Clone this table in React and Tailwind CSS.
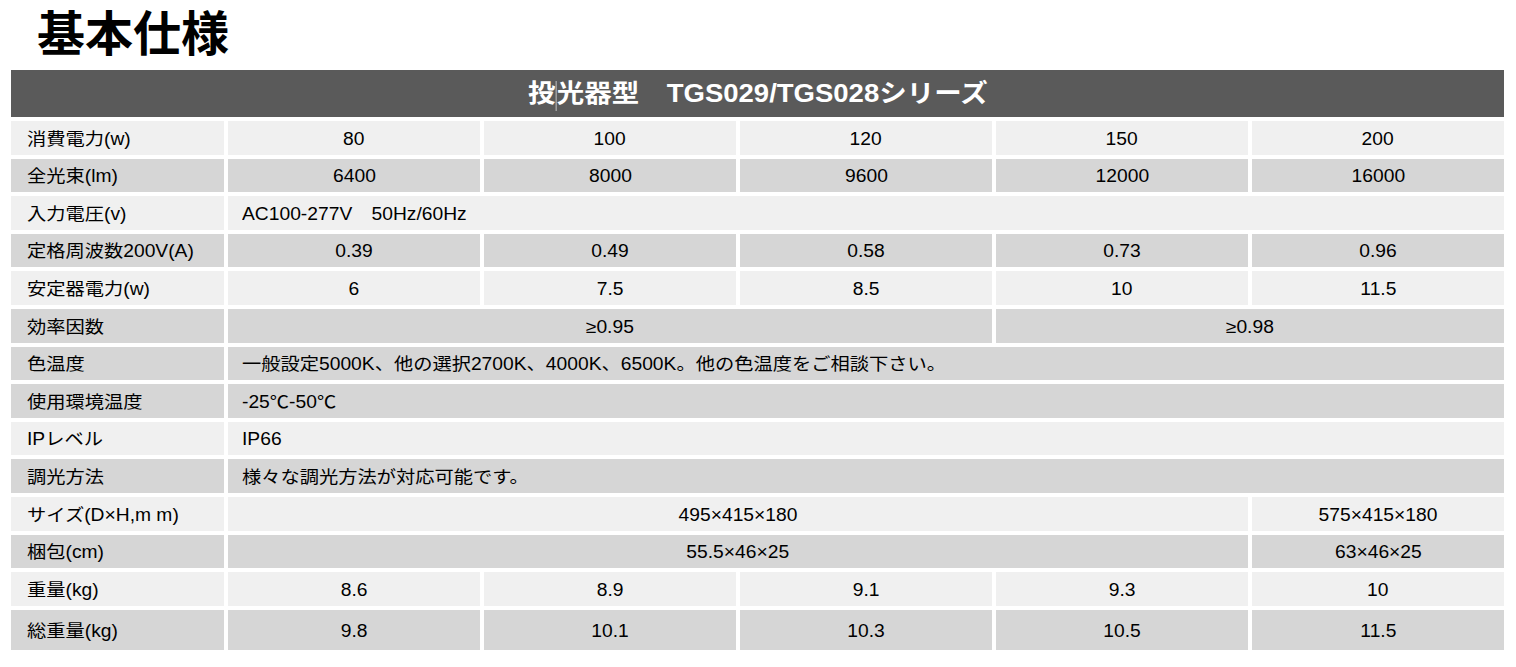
import React from 'react';

// 基本仕様 spec table (TGS029/TGS028)
const spans = {
  1: 'col-span-1',
  2: 'col-span-2',
  3: 'col-span-3',
  4: 'col-span-4',
  5: 'col-span-5',
};

const tones = {
  light: 'bg-[#f0f0f0]',
  dark: 'bg-[#d6d6d6]',
};

const rows = [
  { label: '消費電力(w)', tone: 'light', cells: ['80', '100', '120', '150', '200'] },
  { label: '全光束(lm)', tone: 'dark', cells: ['6400', '8000', '9600', '12000', '16000'] },
  { label: '入力電圧(v)', tone: 'light', wide: 'AC100-277V　50Hz/60Hz' },
  { label: '定格周波数200V(A)', tone: 'dark', cells: ['0.39', '0.49', '0.58', '0.73', '0.96'] },
  { label: '安定器電力(w)', tone: 'light', cells: ['6', '7.5', '8.5', '10', '11.5'] },
  { label: '効率因数', tone: 'dark', cells: [['≥0.95', 3], ['≥0.98', 2]] },
  { label: '色温度', tone: 'dark', wide: '一般設定5000K、他の選択2700K、4000K、6500K。他の色温度をご相談下さい。' },
  { label: '使用環境温度', tone: 'dark', wide: '-25℃-50℃' },
  { label: 'IPレベル', tone: 'light', wide: 'IP66' },
  { label: '調光方法', tone: 'dark', wide: '様々な調光方法が対応可能です。' },
  { label: 'サイズ(D×H,m m)', tone: 'light', cells: [['495×415×180', 4], ['575×415×180', 1]] },
  { label: '梱包(cm)', tone: 'dark', cells: [['55.5×46×25', 4], ['63×46×25', 1]] },
  { label: '重量(kg)', tone: 'light', cells: ['8.6', '8.9', '9.1', '9.3', '10'] },
  { label: '総重量(kg)', tone: 'dark', cells: ['9.8', '10.1', '10.3', '10.5', '11.5'], tall: true },
];

const Row = ({ row }) => {
  const bg = tones[row.tone];
  const h = row.tall ? 'h-[40px]' : 'h-[33.6px]';
  const cells = row.cells
    ? row.cells.map((c) => (Array.isArray(c) ? c : [c, 1]))
    : null;

  return (
    <div className={`grid grid-cols-[213px_repeat(5,252px)] gap-x-[4px] ${h}`}>
      <div className={`${bg} flex items-center pl-[16px] pt-[2px]`}>
        <span className="inline-block scale-x-110 origin-left whitespace-pre">{row.label}</span>
      </div>
      {cells ? (
        cells.map(([text, span], i) => (
          <div key={i} className={`${bg} ${spans[span]} flex items-center justify-center pt-[2px]`}>
            <span className="inline-block scale-x-110 origin-center whitespace-nowrap">{text}</span>
          </div>
        ))
      ) : (
        <div className={`${bg} col-span-5 flex items-center pl-[14px] pt-[2px]`}>
          <span className="inline-block scale-x-110 origin-left whitespace-nowrap">{row.wide}</span>
        </div>
      )}
    </div>
  );
};

export default function App() {
  return (
    <div className="w-[1516px] h-[667px] bg-white text-black font-['Liberation_Sans','Noto_Sans_CJK_JP',sans-serif] overflow-hidden">
      <div className="h-[70px] pt-[11px] pl-[37px]">
        <h1 className="text-[48px] leading-[48px] font-bold">基本仕様</h1>
      </div>

      <div className="ml-[11px] w-[1493px]">
        <div className="h-[47px] bg-[#5a5a5a] flex items-center justify-center text-white text-[25px] font-bold pt-[1px]">
          <span className="inline-block scale-x-110 origin-center whitespace-nowrap">
            投<span className="inline-block w-px h-[30px] bg-[#b8b8b8] align-middle"></span>光器型　TGS029/TGS028シリーズ
          </span>
        </div>

        <div className="mt-[4px] flex flex-col gap-y-[4px] text-[17.5px]">
          {rows.map((row) => (
            <Row key={row.label} row={row} />
          ))}
        </div>
      </div>
    </div>
  );
}
